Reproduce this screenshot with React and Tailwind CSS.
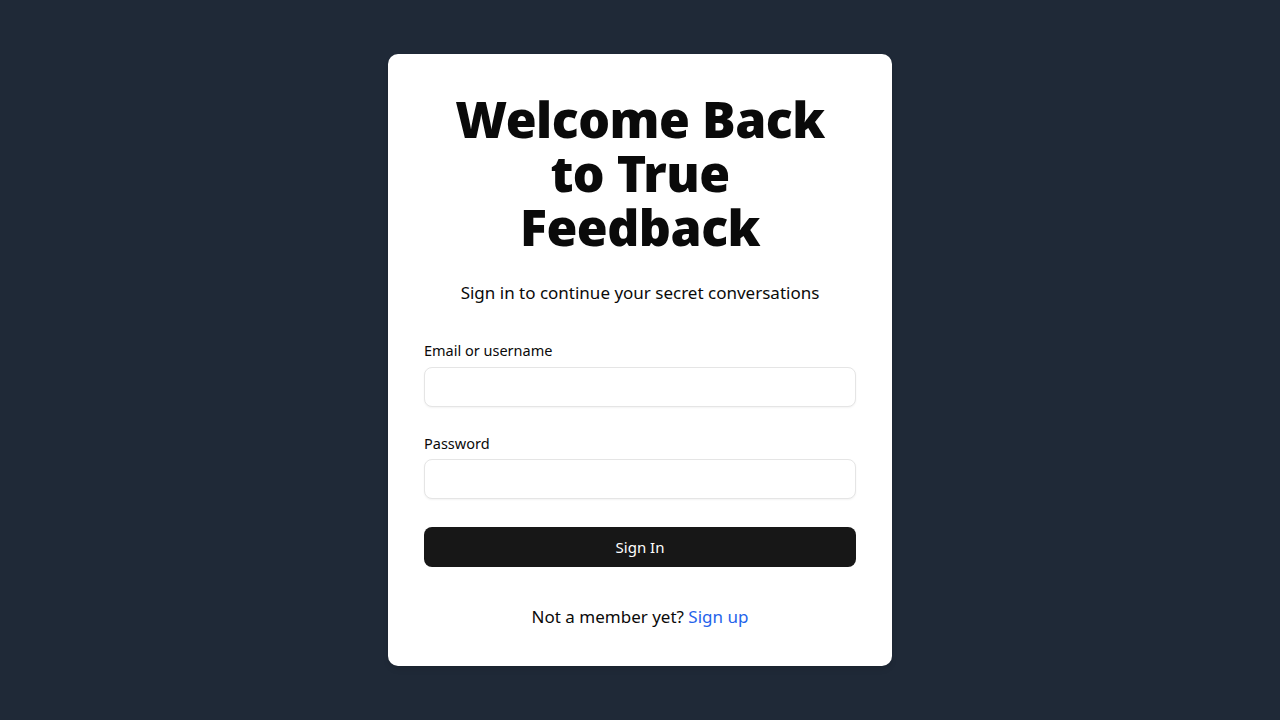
export default function App() {
  const body = { fontFamily: '"Noto Sans", "Open Sans", sans-serif' };
  return (
    <div className="min-h-screen w-full flex items-center justify-center bg-[#1f2937]" style={body}>
      <div className="w-[504px] bg-white rounded-[10px] px-9 pt-[38px] pb-[35px] shadow-md">
        <h1
          className="text-center text-[50px] leading-[54px] font-black text-[#0a0a0a] tracking-[-0.5px]"
          style={{ fontFamily: '"Noto Sans", Lato, sans-serif' }}
        >
          Welcome Back
          <br />
          to True
          <br />
          Feedback
        </h1>
        <p className="mt-[25px] text-center text-[17px] leading-[28px] text-[#0a0a0a]">
          Sign in to continue your secret conversations
        </p>
        <form className="mt-[31px] flex flex-col" onSubmit={(e) => e.preventDefault()}>
          <label className="text-[14.5px] leading-[24px] text-[#0a0a0a]">Email or username</label>
          <input
            type="text"
            className="mt-[5px] h-10 w-full rounded-lg border border-[#e5e5e5] bg-white px-3 text-sm outline-none shadow-xs"
          />
          <label className="mt-6 text-[14.5px] leading-[24px] text-[#0a0a0a]">Password</label>
          <input
            type="password"
            className="mt-[4px] h-10 w-full rounded-lg border border-[#e5e5e5] bg-white px-3 text-sm outline-none shadow-xs"
          />
          <button
            type="submit"
            className="mt-7 h-10 w-full rounded-lg bg-[#171717] text-white text-[15px]"
          >
            Sign In
          </button>
        </form>
        <p className="mt-9 text-center text-[17px] leading-[28px] text-[#0a0a0a]">
          Not a member yet? <a href="#" className="text-[#2563eb]">Sign up</a>
        </p>
      </div>
    </div>
  );
}
